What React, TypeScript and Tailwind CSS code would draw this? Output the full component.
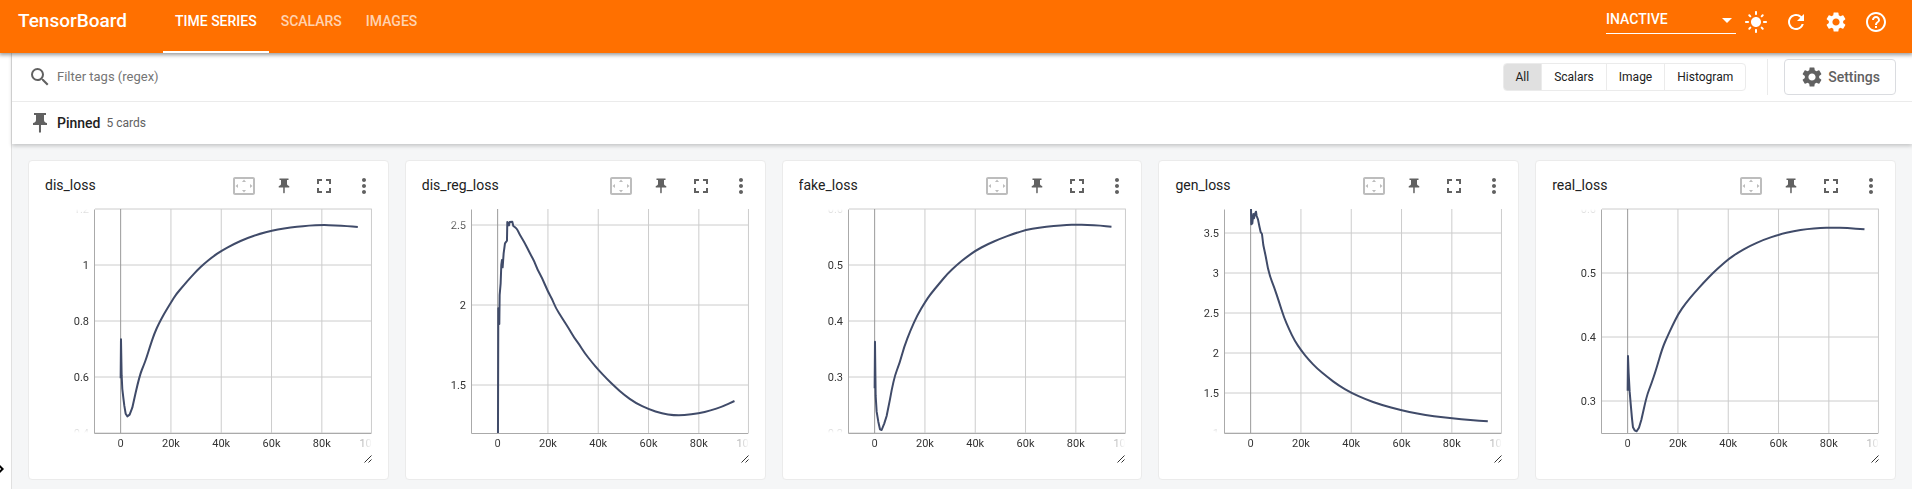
import {
  MdArrowDropDown,
  MdChevronRight,
  MdFullscreen,
  MdHelpOutline,
  MdLightMode,
  MdMoreVert,
  MdRefresh,
  MdSearch,
  MdSettings,
  MdSettingsOverscan,
} from "react-icons/md";

type Point = [number, number];
type Tick = { label: string; at: number };
type Card = { tag: string; ticks: Tick[]; points: Point[] };

// Curves and ticks live on a plot grid of 831 x 672 units.
const PLOT_W = 831;
const PLOT_H = 672;

const X_TICKS: Tick[] = [
  { label: "0", at: 77 },
  { label: "20k", at: 228 },
  { label: "40k", at: 379 },
  { label: "60k", at: 530 },
  { label: "80k", at: 681 },
  { label: "100k", at: 830 },
];

const CARDS: Card[] = [
  {
    tag: "dis_loss",
    ticks: [
      { label: "1.2", at: 0 },
      { label: "1", at: 168 },
      { label: "0.8", at: 336 },
      { label: "0.6", at: 504 },
      { label: "0.4", at: 672 },
    ],
    points: [
      [77, 508], [78, 391], [80, 500], [82, 540], [85, 566], [88, 590], [92, 614], [97, 622], [104, 617],
      [112, 596], [122, 551], [134, 499], [147, 467], [154, 448], [165, 413], [178, 374], [192, 343],
      [207, 315], [229, 279], [244, 255], [265, 231], [287, 205], [307, 184], [329, 163], [354, 143],
      [380, 125], [417, 105], [457, 87], [494, 75], [531, 65], [567, 58], [607, 53], [642, 50],
      [682, 48], [722, 49], [757, 51], [789, 54],
    ],
  },
  {
    tag: "dis_reg_loss",
    ticks: [
      { label: "2.5", at: 48 },
      { label: "2", at: 288 },
      { label: "1.5", at: 528 },
    ],
    points: [
      [78, 672], [79, 298], [82, 298], [82, 345], [83, 258], [86, 223], [88, 168], [90, 153], [92, 175],
      [95, 133], [99, 103], [105, 95], [106, 39], [111, 49], [113, 39], [121, 38], [124, 51], [130, 55],
      [136, 61], [142, 75], [156, 97], [176, 137], [188, 159], [196, 181], [211, 208], [228, 248],
      [241, 271], [251, 296], [271, 328], [291, 359], [306, 385], [321, 405], [339, 433], [361, 461],
      [380, 483], [406, 511], [431, 535], [456, 557], [491, 582], [531, 601], [571, 614], [606, 619],
      [636, 619], [681, 613], [716, 605], [751, 593], [788, 576],
    ],
  },
  {
    tag: "fake_loss",
    ticks: [
      { label: "0.6", at: 0 },
      { label: "0.5", at: 168 },
      { label: "0.4", at: 336 },
      { label: "0.3", at: 504 },
      { label: "0.2", at: 672 },
    ],
    points: [
      [77, 538], [78, 398], [80, 560], [83, 608], [88, 638], [93, 661], [98, 663], [106, 643], [113, 621],
      [123, 571], [134, 509], [153, 460], [165, 415], [185, 363], [205, 319], [228, 280], [245, 255],
      [270, 225], [295, 195], [325, 167], [353, 144], [380, 125], [415, 106], [455, 89], [495, 74],
      [531, 63], [570, 56], [615, 51], [655, 48], [682, 47], [715, 48], [755, 50], [788, 53],
    ],
  },
  {
    tag: "gen_loss",
    ticks: [
      { label: "3.5", at: 72 },
      { label: "3", at: 192 },
      { label: "2.5", at: 312 },
      { label: "2", at: 432 },
      { label: "1.5", at: 552 },
      { label: "1", at: 672 },
    ],
    points: [
      [78, -7], [79, 46], [82, 43], [85, 15], [87, 28], [90, 15], [93, 8], [95, 21], [99, 31], [103, 51],
      [107, 69], [111, 75], [115, 108], [122, 141], [129, 178], [135, 203], [147, 233], [162, 278],
      [177, 325], [192, 360], [209, 395], [229, 425], [252, 453], [277, 479], [307, 504], [342, 530],
      [380, 552], [422, 571], [467, 587], [530, 604], [577, 614], [627, 622], [682, 628], [737, 633],
      [789, 637],
    ],
  },
  {
    tag: "real_loss",
    ticks: [
      { label: "0.6", at: 0 },
      { label: "0.5", at: 192 },
      { label: "0.4", at: 384 },
      { label: "0.3", at: 576 },
    ],
    points: [
      [77, 545], [78, 441], [80, 493], [83, 548], [86, 583], [90, 628], [93, 655], [98, 664], [104, 667],
      [111, 656], [118, 633], [126, 598], [134, 561], [148, 525], [162, 483], [181, 418], [196, 383],
      [211, 351], [229, 315], [251, 283], [276, 253], [306, 220], [334, 191], [358, 169], [380, 150],
      [408, 131], [443, 111], [486, 92], [531, 77], [576, 66], [616, 60], [656, 57], [691, 56],
      [736, 57], [788, 61],
    ],
  },
];

const pctX = (v: number) => `${(v / PLOT_W) * 100}%`;
const pctY = (v: number) => `${(v / PLOT_H) * 100}%`;

// Straight segments through the noisy start, quadratic smoothing afterwards.
function curve(points: Point[]) {
  let d = `M${points[0][0]} ${points[0][1]}`;
  for (let i = 1; i < points.length - 1; i++) {
    const [x, y] = points[i];
    if (x < 130) {
      d += `L${x} ${y}`;
    } else {
      const [nx, ny] = points[i + 1];
      d += `Q${x} ${y} ${(x + nx) / 2} ${(y + ny) / 2}`;
    }
  }
  const last = points[points.length - 1];
  return `${d}L${last[0]} ${last[1]}`;
}

function PinIcon({ className }: { className: string }) {
  return (
    <svg viewBox="0 0 24 24" fill="currentColor" className={className} aria-hidden="true">
      <path d="M16 9V4h2V2H6v2h2v5c0 1.66-1.34 3-3 3v2h5.97v7l1 1 1-1v-7H19v-2c-1.66 0-3-1.34-3-3z" />
    </svg>
  );
}

function Chart({ card }: { card: Card }) {
  return (
    <div className="relative grid grid-cols-[50px_1fr]">
      <svg className="h-56 w-full mask-[linear-gradient(to_bottom,transparent,black_10%,black_90%,transparent)]">
        {card.ticks.map((t) => (
          <text key={t.label} x="44" y={pctY(t.at)} dy="4" textAnchor="end" className="fill-[#333] text-[11px]">
            {t.label}
          </text>
        ))}
      </svg>
      <svg className="h-56 w-full overflow-visible" role="img" aria-label={card.tag}>
        {card.ticks.map((t) => (
          <line key={t.label} x1="0" x2="100%" y1={pctY(t.at)} y2={pctY(t.at)} stroke="#ccc" />
        ))}
        {X_TICKS.map((t) => (
          <line key={t.label} x1={pctX(t.at)} x2={pctX(t.at)} y1="0" y2="100%" stroke={t.at === 77 ? "#999" : "#ccc"} />
        ))}
        <g stroke="#aaa" transform="translate(-0.5 0.5)">
          <line x1="0" x2="0" y1="0" y2="100%" />
          <line x1="0" x2="100%" y1="100%" y2="100%" />
        </g>
        <svg width="100%" height="100%" viewBox={`0 0 ${PLOT_W} ${PLOT_H}`} preserveAspectRatio="none">
          <path
            d={curve(card.points)}
            fill="none"
            stroke="#404b69"
            strokeWidth="2"
            strokeLinejoin="round"
            vectorEffect="non-scaling-stroke"
          />
        </svg>
      </svg>
      <svg className="col-start-2 h-[30px] w-full mask-[linear-gradient(to_right,transparent,black_10%,black_90%,transparent)]">
        {X_TICKS.map((t) => (
          <text key={t.label} x={pctX(t.at)} y="14" textAnchor="middle" className="fill-[#333] text-[11px]">
            {t.label}
          </text>
        ))}
      </svg>
      <svg className="absolute right-0 bottom-0 size-2" viewBox="0 0 8 8" stroke="#333" aria-hidden="true">
        <path d="M0.5 7.5L7.5 0.5M4.5 7.5L7.5 4.5" />
      </svg>
    </div>
  );
}

function ScalarCard({ card }: { card: Card }) {
  const button = "flex size-10 items-center justify-center";
  return (
    <article className="rounded border border-[#ebebeb] bg-white pb-4">
      <header className="flex h-12 items-center pr-1 pl-4">
        <h3 className="flex-1 truncate text-sm text-[#212121]">{card.tag}</h3>
        <div className="flex pt-[2px] text-[#616161]">
          <button className={`${button} text-[#bdbdbd]`} aria-label="Fit domain to data" disabled>
            <MdSettingsOverscan className="size-6" />
          </button>
          <button className={button} aria-label="Unpin card">
            <PinIcon className="size-[18px]" />
          </button>
          <button className={button} aria-label="Toggle full size">
            <MdFullscreen className="size-6" />
          </button>
          <button className={button} aria-label="More options">
            <MdMoreVert className="size-6" />
          </button>
        </div>
      </header>
      <div className="px-4">
        <Chart card={card} />
      </div>
    </article>
  );
}

function TopBar() {
  const tab = "flex items-center border-b-2 px-3 pb-[9px] text-sm font-medium";
  const action = "flex size-10 items-center justify-center";
  return (
    <header className="relative z-10 flex h-[53px] bg-[#ff7000] text-white shadow-[0_1px_4px_1px_rgba(0,0,0,0.4)]">
      <h1 className="flex items-center pr-9 pb-[11px] pl-[18px] text-[19px] font-medium">TensorBoard</h1>
      <nav className="flex flex-1">
        <a href="#timeseries" className={`${tab} border-white`}>TIME SERIES</a>
        <a href="#scalars" className={`${tab} border-transparent text-white/70`}>SCALARS</a>
        <a href="#images" className={`${tab} border-transparent text-white/70`}>IMAGES</a>
      </nav>
      <div className="flex items-start pt-[2px] pr-4">
        <div className="relative">
          <select
            aria-label="Inactive dashboards"
            className="h-8 w-[130px] appearance-none border-b border-white pt-[3px] text-sm font-medium"
          >
            <option>INACTIVE</option>
          </select>
          <MdArrowDropDown className="pointer-events-none absolute top-[6px] right-[-3px] size-6" />
        </div>
        <button className={action} aria-label="Theme"><MdLightMode className="size-6" /></button>
        <button className={action} aria-label="Reload"><MdRefresh className="size-6" /></button>
        <button className={action} aria-label="Preferences"><MdSettings className="size-6" /></button>
        <button className={action} aria-label="Help"><MdHelpOutline className="size-6" /></button>
      </div>
    </header>
  );
}

function FilterBar() {
  return (
    <div className="flex h-[49px] items-center border-b border-[#ebebeb] px-4">
      <label htmlFor="tag-filter" className="pr-[5px] text-[#616161]" aria-label="Filter tags">
        <MdSearch className="size-6" />
      </label>
      <input
        id="tag-filter"
        placeholder="Filter tags (regex)"
        className="min-w-0 flex-1 text-[13px] outline-none placeholder:text-[#757575]"
      />
      <div className="flex divide-x divide-[#ebebeb] overflow-hidden rounded border border-[#ebebeb] text-xs text-[#212121]">
        {["All", "Scalars", "Image", "Histogram"].map((name) => (
          <button key={name} className="px-3 py-[5px] first:bg-[#e0e0e0]">{name}</button>
        ))}
      </div>
      <div className="ml-[21px] flex h-9 border-l border-[#ebebeb] pl-4">
        <button className="flex items-center gap-1 rounded border border-[#dadce0] px-[15px] text-sm font-medium text-[#616161]">
          <MdSettings className="size-6" />
          Settings
        </button>
      </div>
    </div>
  );
}

export default function App() {
  return (
    <div className="flex min-h-screen flex-col bg-white font-[Roboto,sans-serif]">
      <TopBar />
      <div className="flex flex-1">
        <aside className="flex w-3 flex-col justify-end border-r border-[#e0e0e0]">
          <button className="flex h-10 items-center overflow-hidden text-black" aria-label="Expand sidebar">
            <MdChevronRight className="-ml-3 size-6 shrink-0" />
          </button>
        </aside>
        <main className="flex min-w-0 flex-1 flex-col bg-[#f5f6f7]">
          <div className="bg-white shadow-[0_2px_4px_rgba(0,0,0,0.2)]">
            <FilterBar />
            <div className="flex h-[42px] items-center px-4">
              <PinIcon className="mr-[5px] size-6 text-[#616161]" />
              <h2 className="text-sm font-medium text-[#212121]">Pinned</h2>
              <span className="ml-1.5 text-xs text-[#616161]">5 cards</span>
            </div>
          </div>
          <section className="grid grid-cols-[repeat(auto-fill,minmax(335px,1fr))] gap-4 px-4 pt-4 pb-2">
            {CARDS.map((card) => (
              <ScalarCard key={card.tag} card={card} />
            ))}
          </section>
        </main>
      </div>
    </div>
  );
}
